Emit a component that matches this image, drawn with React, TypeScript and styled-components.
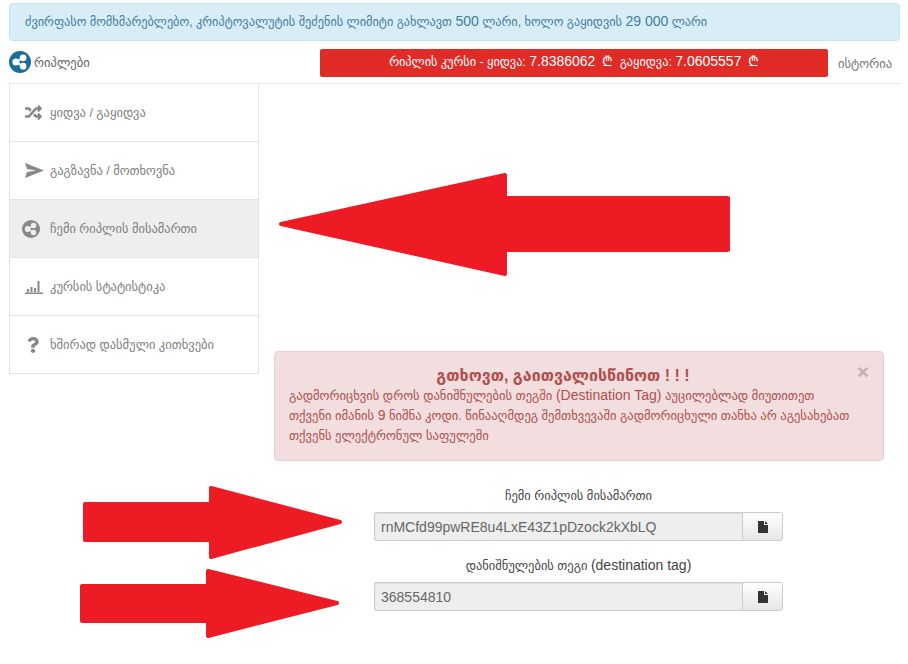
import React from "react";
import styled, { createGlobalStyle } from "styled-components";
import { FaRandom, FaQuestion } from "react-icons/fa";

const GlobalStyle = createGlobalStyle`
  html, body {
    margin: 0;
    padding: 0;
    background: #fff;
  }
  body {
    font-family: "Liberation Sans", "DejaVu Sans", sans-serif;
    font-size: 12.5px;
    color: #555;
  }
`;

const RippleMark = ({ fg }: { fg: string }) => (
  <svg viewBox="0 0 24 24" width="100%" height="100%">
    <g fill={fg} stroke={fg} strokeWidth="1.8">
      <circle cx="7.6" cy="12" r="3" />
      <circle cx="15.4" cy="7.4" r="2.8" />
      <circle cx="15.4" cy="16.6" r="2.8" />
      <path d="M7.6 12L15.4 7.4M7.6 12L15.4 16.6" fill="none" />
    </g>
  </svg>
);

const SendIcon = () => (
  <svg viewBox="0 0 19 15" width="19" height="15">
    <path d="M0 0L19 7.5L0 15L2 9L11 7.5L2 6Z" fill="#888" />
  </svg>
);

const ChartIcon = () => (
  <svg viewBox="0 0 18 14" width="18" height="14">
    <path d="M0 12.5h18V14H0zM2 9h2v3H2zM5.5 7h2v5h-2zM9 8h2v4H9zM12.5 1h2v11h-2z" fill="#888" />
  </svg>
);

const FileIcon = () => (
  <svg viewBox="0 0 10 12" width="10" height="12">
    <path d="M0 0H6V4H10V12H0ZM7 0L10 3H7Z" fill="#333" />
  </svg>
);

const Page = styled.div`
  position: relative;
  width: 908px;
  height: 664px;
  padding: 3px 8px 0 9px;
  box-sizing: border-box;
  overflow: hidden;
`;
// the latin letters and digits sit a size above the georgian ones
const Latin = styled.span`
  font-size: 14px;
  line-height: 1;
`;
const InfoAlert = styled.div`
  height: 38px;
  box-sizing: border-box;
  padding: 0 15px;
  line-height: 36px;
  background: #d9edf7;
  border: 1px solid #bce8f1;
  border-radius: 4px;
  color: #3f7f9f;
  font-size: 12.3px;
`;
const TopRow = styled.div`
  display: flex;
  align-items: center;
  height: 28px;
  margin-top: 8px;
  padding-bottom: 6px;
  border-bottom: 1px solid #e7e7e7;
`;
const Brand = styled.div`
  display: flex;
  align-items: center;
  gap: 3px;
  width: 311px;
  padding-bottom: 2px;
  font-size: 12.6px;
  color: #666;
`;
const Logo = styled.span`
  width: 22px;
  height: 22px;
  border-radius: 50%;
  background: #1a6c9c;
`;
const RateBar = styled.div`
  width: 508px;
  height: 28px;
  line-height: 27px;
  text-align: center;
  background: #e02b27;
  border-radius: 2px;
  color: #fff;
  font-size: 12.3px;
  white-space: pre;
`;
const Lari = styled.span`
  margin-left: 3px;
  font-family: "DejaVu Sans", sans-serif;
  font-size: 14px;
  line-height: 1;
`;
const History = styled.div`
  margin-left: 10px;
  font-size: 12.6px;
  color: #777;
`;
const Body = styled.div`
  display: flex;
  align-items: flex-start;
`;
const Sidebar = styled.nav`
  width: 250px;
  box-sizing: border-box;
  border-left: 1px solid #e3e3e3;
  border-right: 1px solid #e3e3e3;
  flex-shrink: 0;
`;
const MenuItem = styled.div<{ $active?: boolean }>`
  height: 58px;
  box-sizing: border-box;
  display: flex;
  align-items: center;
  padding-left: 15px;
  border-bottom: 1px solid #e3e3e3;
  background: ${(p) => (p.$active ? "#eee" : "#fff")};
  color: #7d7d7d;
  font-size: 12.5px;
`;
const MenuIcon = styled.span`
  width: 25px;
  display: flex;
  align-items: center;
`;
const IconDisc = styled.span`
  width: 18px;
  height: 18px;
  margin-left: -3px;
  border-radius: 50%;
  background: #888;
`;
const Content = styled.div`
  flex: 1;
  padding: 267px 16px 0 15px;
`;
const DangerAlert = styled.div`
  position: relative;
  height: 110px;
  box-sizing: border-box;
  padding: 14px 14px 0;
  background: #f2dede;
  border: 1px solid #ebccd1;
  border-radius: 4px;
  color: #b0504e;
  font-size: 12.6px;
  line-height: 20px;
`;
const DangerTitle = styled.div`
  padding-right: 32px;
  text-align: center;
  font-size: 16px;
  font-weight: bold;
`;
const DangerLine = styled.div`
  white-space: nowrap;
`;
const CloseMark = styled.span`
  position: absolute;
  top: 10px;
  right: 14px;
  font-size: 21px;
  font-weight: bold;
  color: #000;
  opacity: 0.2;
`;
const FormBox = styled.div`
  width: 409px;
  margin: 25px 0 0 100px;
`;
const FieldLabel = styled.div`
  text-align: center;
  font-size: 12.5px;
  line-height: 21px;
  color: #444;
  margin-bottom: 5px;
`;
const InputGroup = styled.div`
  display: flex;
  height: 29px;
  margin-bottom: 15px;
`;
const ReadonlyField = styled.div`
  flex: 1;
  display: flex;
  align-items: center;
  padding-left: 6px;
  background: #eee;
  border: 1px solid #ccc;
  border-right: 0;
  border-radius: 3px 0 0 3px;
  box-shadow: inset 0 1px 1px rgba(0, 0, 0, 0.075);
  color: #666;
  font-size: 14px;
`;
const CopyButton = styled.div`
  width: 39px;
  display: flex;
  align-items: center;
  justify-content: center;
  background: linear-gradient(#fff, #e6e6e6);
  border: 1px solid #ccc;
  border-radius: 0 3px 3px 0;
`;
const ArrowLayer = styled.svg`
  position: absolute;
  inset: 0;
  width: 908px;
  height: 664px;
  pointer-events: none;
  fill: #ed1c24;
  stroke: #ed1c24;
  stroke-width: 4;
  stroke-linejoin: round;
`;

const menu = [
  { label: "ყიდვა / გაყიდვა", icon: <FaRandom size={17} color="#888" /> },
  { label: "გაგზავნა / მოთხოვნა", icon: <SendIcon /> },
  { label: "ჩემი რიპლის მისამართი", icon: <IconDisc><RippleMark fg="#eee" /></IconDisc>, active: true },
  { label: "კურსის სტატისტიკა", icon: <ChartIcon /> },
  { label: "ხშირად დასმული კითხვები", icon: <FaQuestion size={16} color="#888" /> },
];

const App = () => (
  <Page>
    <GlobalStyle />
    <InfoAlert>
      ძვირფასო მომხმარებლებო, კრიპტოვალუტის შეძენის ლიმიტი გახლავთ <Latin>500</Latin> ლარი, ხოლო გაყიდვის <Latin>29 000</Latin> ლარი
    </InfoAlert>
    <TopRow>
      <Brand>
        <Logo><RippleMark fg="#fff" /></Logo>
        რიპლები
      </Brand>
      <RateBar>
        რიპლის კურსი - ყიდვა: <Latin>7.8386062</Latin> <Lari>₾</Lari>  გაყიდვა: <Latin>7.0605557</Latin> <Lari>₾</Lari>
      </RateBar>
      <History>ისტორია</History>
    </TopRow>
    <Body>
      <Sidebar>
        {menu.map((item) => (
          <MenuItem key={item.label} $active={item.active}>
            <MenuIcon>{item.icon}</MenuIcon>
            {item.label}
          </MenuItem>
        ))}
      </Sidebar>
      <Content>
        <DangerAlert>
          <CloseMark>×</CloseMark>
          <DangerTitle>გთხოვთ, გაითვალისწინოთ ! ! !</DangerTitle>
          <DangerLine>გადმორიცხვის დროს დანიშნულების თეგში <Latin>(Destination Tag)</Latin> აუცილებლად მიუთითეთ</DangerLine>
          <DangerLine>თქვენი იმანის <Latin>9</Latin> ნიშნა კოდი. წინააღმდეგ შემთხვევაში გადმორიცხული თანხა არ აგესახებათ</DangerLine>
          <DangerLine>თქვენს ელექტრონულ საფულეში</DangerLine>
        </DangerAlert>
        <FormBox>
          <FieldLabel>ჩემი რიპლის მისამართი</FieldLabel>
          <InputGroup>
            <ReadonlyField>rnMCfd99pwRE8u4LxE43Z1pDzock2kXbLQ</ReadonlyField>
            <CopyButton><FileIcon /></CopyButton>
          </InputGroup>
          <FieldLabel>დანიშნულების თეგი <Latin>(destination tag)</Latin></FieldLabel>
          <InputGroup>
            <ReadonlyField>368554810</ReadonlyField>
            <CopyButton><FileIcon /></CopyButton>
          </InputGroup>
        </FormBox>
      </Content>
    </Body>
    {/* the arrows were painted on top of the screenshot */}
    <ArrowLayer viewBox="0 0 908 664">
      <path d="M281 224L505 175V198H728V250H505V274Z" />
      <path d="M85 504H211V488L340 522L211 557V540H85Z" />
      <path d="M82 586H208V571L337 603L208 636V621H82Z" />
    </ArrowLayer>
  </Page>
);

export default App;
